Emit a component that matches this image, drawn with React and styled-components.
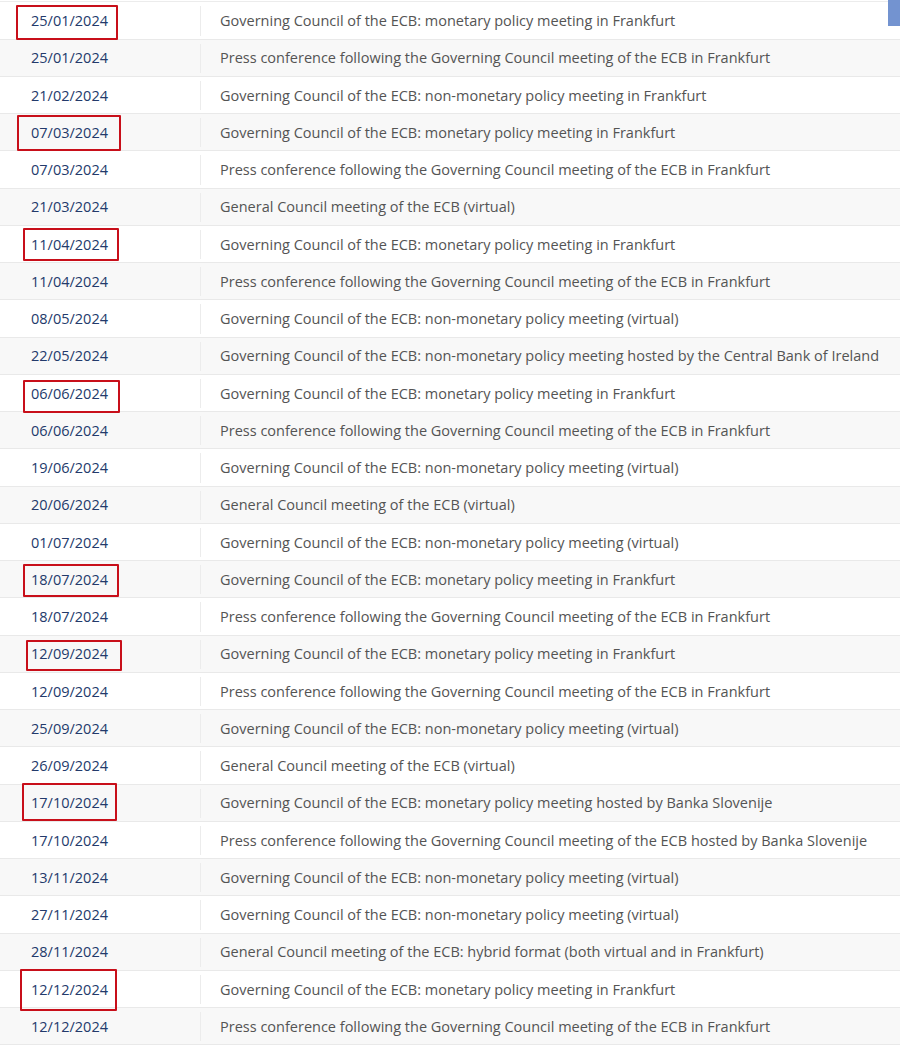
import styled, { createGlobalStyle } from "styled-components";

const GlobalStyle = createGlobalStyle`
  html, body {
    margin: 0;
    padding: 0;
    background: #fff;
  }
  body {
    font-family: "Open Sans", "Noto Sans", sans-serif;
  }
`;

const meetings = [
  ["25/01/2024", "Governing Council of the ECB: monetary policy meeting in Frankfurt", { x: 16, y: 2.6, w: 102, h: 35 }],
  ["25/01/2024", "Press conference following the Governing Council meeting of the ECB in Frankfurt"],
  ["21/02/2024", "Governing Council of the ECB: non-monetary policy meeting in Frankfurt"],
  ["07/03/2024", "Governing Council of the ECB: monetary policy meeting in Frankfurt", { x: 17, y: 0.8, w: 104, h: 36 }],
  ["07/03/2024", "Press conference following the Governing Council meeting of the ECB in Frankfurt"],
  ["21/03/2024", "General Council meeting of the ECB (virtual)"],
  ["11/04/2024", "Governing Council of the ECB: monetary policy meeting in Frankfurt", { x: 23, y: 2, w: 96, h: 33 }],
  ["11/04/2024", "Press conference following the Governing Council meeting of the ECB in Frankfurt"],
  ["08/05/2024", "Governing Council of the ECB: non-monetary policy meeting (virtual)"],
  ["22/05/2024", "Governing Council of the ECB: non-monetary policy meeting hosted by the Central Bank of Ireland"],
  ["06/06/2024", "Governing Council of the ECB: monetary policy meeting in Frankfurt", { x: 23, y: 5, w: 97, h: 33 }],
  ["06/06/2024", "Press conference following the Governing Council meeting of the ECB in Frankfurt"],
  ["19/06/2024", "Governing Council of the ECB: non-monetary policy meeting (virtual)"],
  ["20/06/2024", "General Council meeting of the ECB (virtual)"],
  ["01/07/2024", "Governing Council of the ECB: non-monetary policy meeting (virtual)"],
  ["18/07/2024", "Governing Council of the ECB: monetary policy meeting in Frankfurt", { x: 23, y: 2.7, w: 96, h: 33 }],
  ["18/07/2024", "Press conference following the Governing Council meeting of the ECB in Frankfurt"],
  ["12/09/2024", "Governing Council of the ECB: monetary policy meeting in Frankfurt", { x: 26, y: 4, w: 96, h: 31 }],
  ["12/09/2024", "Press conference following the Governing Council meeting of the ECB in Frankfurt"],
  ["25/09/2024", "Governing Council of the ECB: non-monetary policy meeting (virtual)"],
  ["26/09/2024", "General Council meeting of the ECB (virtual)"],
  ["17/10/2024", "Governing Council of the ECB: monetary policy meeting hosted by Banka Slovenije", { x: 22, y: -2, w: 95, h: 38 }],
  ["17/10/2024", "Press conference following the Governing Council meeting of the ECB hosted by Banka Slovenije"],
  ["13/11/2024", "Governing Council of the ECB: non-monetary policy meeting (virtual)"],
  ["27/11/2024", "Governing Council of the ECB: non-monetary policy meeting (virtual)"],
  ["28/11/2024", "General Council meeting of the ECB: hybrid format (both virtual and in Frankfurt)"],
  ["12/12/2024", "Governing Council of the ECB: monetary policy meeting in Frankfurt", { x: 20, y: -2, w: 97, h: 42 }],
  ["12/12/2024", "Press conference following the Governing Council meeting of the ECB in Frankfurt"],
];

const Page = styled.div`
  position: relative;
  width: 900px;
  padding-top: 2.4px;
  overflow: hidden;
`;

const Scroller = styled.div`
  position: absolute;
  top: 0;
  right: 0;
  width: 12px;
  height: 26px;
  background: #7393d0;
`;

const Table = styled.div`
  border-top: 1px solid #ececec;
  margin-top: -1px;
`;

const Row = styled.div`
  position: relative;
  display: grid;
  grid-template-columns: 200px 1fr;
  height: 37.26px;
  box-sizing: border-box;
  padding-top: 1px;
  border-bottom: 1px solid #e9e9e9;
  background: ${(p) => (p.$shaded ? "#f8f8f8" : "#fff")};
  font-size: 14.5px;
  line-height: 20px;
`;

const DateCell = styled.div`
  display: flex;
  align-items: center;
  padding-left: 31px;
  color: #233a6b;
`;

const TextCell = styled.div`
  display: flex;
  align-items: center;
  margin: 3px 0;
  padding-left: 19px;
  border-left: 1px solid #ececec;
  color: #545454;
  white-space: nowrap;
`;

const Mark = styled.span`
  position: absolute;
  z-index: 2;
  left: ${(p) => p.$x}px;
  top: ${(p) => p.$y}px;
  width: ${(p) => p.$w}px;
  height: ${(p) => p.$h}px;
  box-sizing: border-box;
  border: 2.5px solid #c80f1a;
  border-radius: 1px;
  pointer-events: none;
`;

const App = () => {
  return (
    <Page>
      <GlobalStyle />
      <Table>
        {meetings.map(([date, title, mark], i) => (
          <Row key={i} $shaded={i % 2 === 1}>
            <DateCell>{date}</DateCell>
            <TextCell>{title}</TextCell>
            {mark && <Mark $x={mark.x} $y={mark.y} $w={mark.w} $h={mark.h} />}
          </Row>
        ))}
      </Table>
      <Scroller />
    </Page>
  );
};

export default App;
